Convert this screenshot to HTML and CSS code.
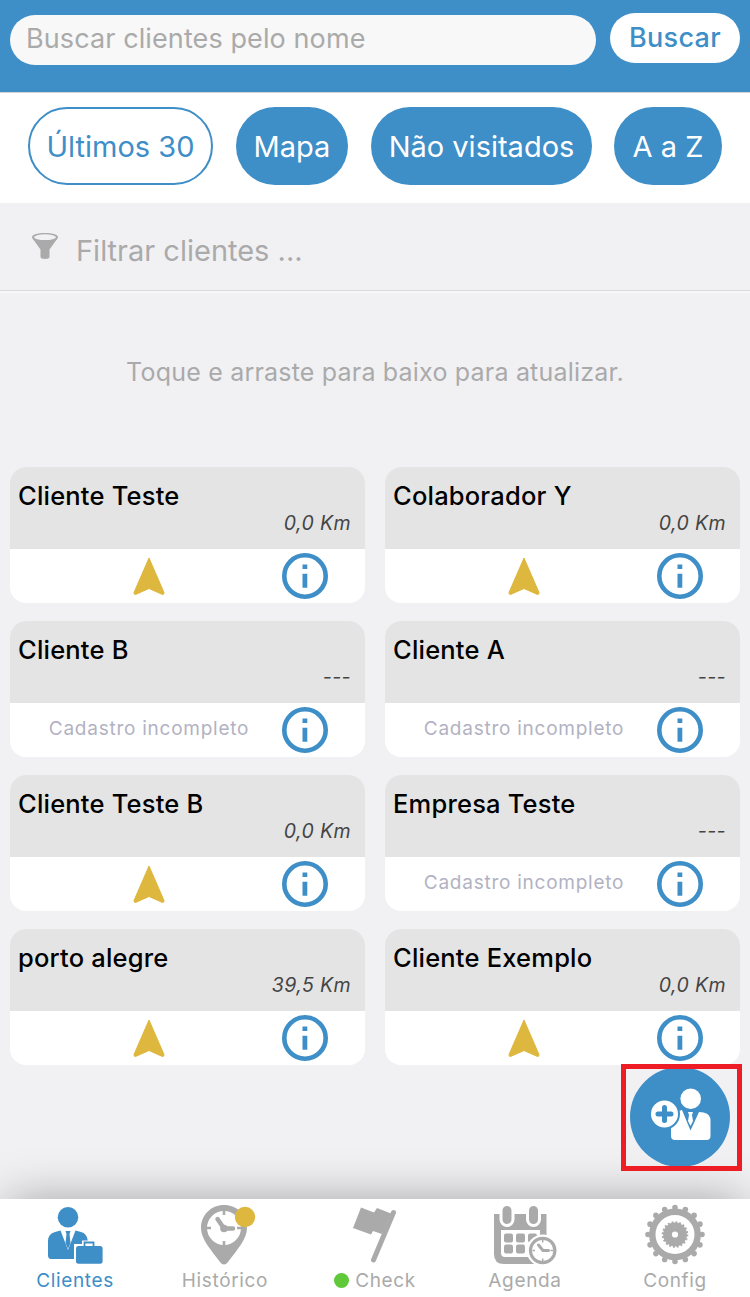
FILE: index.html
```html
<!DOCTYPE html>
<html lang="pt-BR">

<head>
    <meta charset="UTF-8">
    <meta name="viewport" content="width=device-width, initial-scale=1.0">
    <title>Clientes</title>

    <link rel="stylesheet" href="styles.css">
</head>

<body>
    <!-- shared icons -->
    <svg class="sprite" aria-hidden="true">
        <symbol id="arrow" viewBox="0 0 32 40">
            <path d="M16 2 L31 36.5 Q31.2 38.8 29.3 38.4 L16 32.5 L2.7 38.4 Q.8 38.8 1 36.5 Z" fill="#deb73e" stroke="#deb73e" stroke-width="1" stroke-linejoin="round" />
        </symbol>
        <symbol id="info" viewBox="0 0 46 46">
            <circle cx="23" cy="23" r="20.7" fill="none" stroke="#3e8ec7" stroke-width="4.6" />
            <path d="M20.5 11.5h4.8v4.6h-4.8zM20.5 20.8h4.8v14h-4.8z" fill="#3e8ec7" />
        </symbol>
    </svg>

    <div class="main">
        <div class="header">
            <input class="search" type="text" placeholder="Buscar clientes pelo nome">
            <div class="search-btn">Buscar</div>
        </div>

        <div class="pills">
            <div class="pill pill-30 active">Últimos 30</div>
            <div class="pill pill-map">Mapa</div>
            <div class="pill pill-nv">Não visitados</div>
            <div class="pill pill-az">A a Z</div>
        </div>

        <div class="filter">
            <svg class="funnel" width="28" height="28" viewBox="0 0 28 28">
                <path d="M1 5C1 2.600 6.500 1 14 1s13 1.600 13 4c0 1.300-1.200 2.600-2.400 4L18.500 17.500V25c0 1.200-1.800 2-4.500 2s-4.500-.8-4.500-2v-7.500L3.400 9C2.200 7.600 1 6.300 1 5z" fill="#aaa" />
                <ellipse cx="14" cy="5.200" rx="11" ry="2.900" fill="#f1f1f4" />
            </svg>
            <span>Filtrar clientes ...</span>
        </div>

        <div class="refresh">Toque e arraste para baixo para atualizar.</div>

        <div class="cards">
            <div class="card">
                <div class="card-top"><div class="name">Cliente Teste</div><div class="km">0,0 Km</div></div>
                <div class="card-bottom"><div class="status"><svg class="arrow"><use href="#arrow" /></svg></div><svg class="info"><use href="#info" /></svg></div>
            </div>
            <div class="card">
                <div class="card-top"><div class="name">Colaborador Y</div><div class="km">0,0 Km</div></div>
                <div class="card-bottom"><div class="status"><svg class="arrow"><use href="#arrow" /></svg></div><svg class="info"><use href="#info" /></svg></div>
            </div>
            <div class="card">
                <div class="card-top"><div class="name">Cliente B</div><div class="km">---</div></div>
                <div class="card-bottom"><div class="status">Cadastro incompleto</div><svg class="info"><use href="#info" /></svg></div>
            </div>
            <div class="card">
                <div class="card-top"><div class="name">Cliente A</div><div class="km">---</div></div>
                <div class="card-bottom"><div class="status">Cadastro incompleto</div><svg class="info"><use href="#info" /></svg></div>
            </div>
            <div class="card">
                <div class="card-top"><div class="name">Cliente Teste B</div><div class="km">0,0 Km</div></div>
                <div class="card-bottom"><div class="status"><svg class="arrow"><use href="#arrow" /></svg></div><svg class="info"><use href="#info" /></svg></div>
            </div>
            <div class="card">
                <div class="card-top"><div class="name">Empresa Teste</div><div class="km">---</div></div>
                <div class="card-bottom"><div class="status">Cadastro incompleto</div><svg class="info"><use href="#info" /></svg></div>
            </div>
            <div class="card">
                <div class="card-top"><div class="name">porto alegre</div><div class="km">39,5 Km</div></div>
                <div class="card-bottom"><div class="status"><svg class="arrow"><use href="#arrow" /></svg></div><svg class="info"><use href="#info" /></svg></div>
            </div>
            <div class="card">
                <div class="card-top"><div class="name">Cliente Exemplo</div><div class="km">0,0 Km</div></div>
                <div class="card-bottom"><div class="status"><svg class="arrow"><use href="#arrow" /></svg></div><svg class="info"><use href="#info" /></svg></div>
            </div>
        </div>

        <div class="tabs">
            <div class="tab active">
                <svg width="150" height="66" viewBox="0 0 150 66">
                    <circle cx="68" cy="18.300" r="10.300" fill="#3e8ec7" />
                    <path d="M48 56V42q0-7 7-9l5.500-1.500L68 51l7.500-19.500L81 33q6 1.500 6.800 8.500H82V45h-8v15H51q-3 0-3-4z" fill="#3e8ec7" />
                    <path d="M65.500 32h5l-1 3 1 9-2.500 6-2.500-6 1-9z" fill="#3e8ec7" />
                    <rect x="76" y="47" width="26.600" height="17.700" rx="2.500" fill="#3e8ec7" />
                    <path d="M84.500 47v-3.500h9V47" fill="none" stroke="#3e8ec7" stroke-width="1.800" />
                </svg>
                <span>Clientes</span>
            </div>
            <div class="tab">
                <svg width="150" height="66" viewBox="0 0 150 66">
                    <path d="M74 6c-13 0-23 10-23 23 0 11 10 22 19 34q4 5 8 0c9-12 19-23 19-34C97 16 87 6 74 6z" fill="#aaa" />
                    <circle cx="74" cy="29" r="17" fill="#fff" />
                    <path d="M74 12v4M74 42v4M57 29h4M87 29h4" stroke="#aaa" stroke-width="2.500" />
                    <path d="M67.500 20L74 29.500h9" fill="none" stroke="#aaa" stroke-width="4.500" stroke-linecap="round" stroke-linejoin="round" />
                    <circle cx="74" cy="29.500" r="3.800" fill="#aaa" />
                    <circle cx="95" cy="18" r="10.200" fill="#deb73e" />
                </svg>
                <span>Histórico</span>
            </div>
            <div class="tab">
                <svg width="150" height="66" viewBox="0 0 150 66">
                    <path d="M61 8.500l13 5 3-4.500 14 5.500L82 35l-9-3-2 3.500L53 29z" fill="#aaa" />
                    <path d="M93.500 13.500L73.500 61" stroke="#aaa" stroke-width="5" stroke-linecap="round" />
                </svg>
                <span><i class="dot"></i>Check</span>
            </div>
            <div class="tab">
                <svg width="150" height="66" viewBox="0 0 150 66">
                    <path d="M44 15h52.500v42q0 8-8 8H54q-10 0-10-10z" fill="#aaa" />
                    <path d="M51 31h39v27H55q-4 0-4-4z" fill="#fff" />
                    <g fill="#aaa" stroke="#fff" stroke-width="3">
                        <rect x="51" y="5.500" width="12" height="21" rx="6" />
                        <rect x="77.500" y="5.500" width="12" height="21" rx="6" />
                    </g>
                    <g fill="#aaa">
                        <rect x="54" y="34.500" width="9" height="9" rx="2" />
                        <rect x="66" y="34.500" width="9" height="9" rx="2" />
                        <rect x="78" y="34.500" width="9" height="9" rx="2" />
                        <rect x="54" y="45.500" width="9" height="9" rx="2" />
                        <rect x="66" y="45.500" width="9" height="9" rx="2" />
                    </g>
                    <circle cx="92.700" cy="51.500" r="16" fill="#fff" />
                    <circle cx="92.700" cy="51.500" r="12.200" fill="#fff" stroke="#aaa" stroke-width="3.200" />
                    <path d="M92.700 41v2.500M92.700 59.500V62M82.500 51.500h2.500M100.500 51.500h2.500" stroke="#aaa" stroke-width="1.500" />
                    <path d="M88.500 46l4.500 5.500h5.500" fill="none" stroke="#aaa" stroke-width="3" stroke-linecap="round" stroke-linejoin="round" />
                </svg>
                <span>Agenda</span>
            </div>
            <div class="tab">
                <svg width="150" height="66" viewBox="0 0 150 66">
                    <circle cx="75" cy="35.500" r="27" fill="none" stroke="#aaa" stroke-width="5.600" stroke-linecap="round" pathLength="160" stroke-dasharray="0 10" />
                    <circle cx="75" cy="35.500" r="22.700" fill="none" stroke="#aaa" stroke-width="6.400" />
                    <circle cx="75" cy="35.500" r="7.500" fill="none" stroke="#aaa" stroke-width="8.800" />
                    <circle cx="75" cy="35.500" r="12.200" fill="none" stroke="#aaa" stroke-width="2.200" stroke-dasharray="1.916 1.916" />
                </svg>
                <span>Config</span>
            </div>
        </div>

        <!-- floating "new client" button -->
        <div class="add">
            <svg width="111" height="97" viewBox="0 0 111 97">
                <circle cx="54" cy="48" r="50" fill="#3e8ec7" />
                <circle cx="64.700" cy="29.700" r="10.300" fill="#fff" />
                <path d="M45 67V46q2-3 6-3.500l5-1.500L64.500 61.500 73 43l4.500.5q7 1.500 7 8V67q0 4-4 4H49q-4 0-4-4z" fill="#fff" />
                <path d="M62 43h5l-1 3 1 6-2.500 5-2.500-5 1-6z" fill="#fff" />
                <circle cx="38.500" cy="45" r="15.500" fill="#3e8ec7" />
                <circle cx="38.500" cy="45" r="13.500" fill="#fff" />
                <path d="M38.500 38.500v13M32 45h13" stroke="#3e8ec7" stroke-width="5" stroke-linecap="round" />
            </svg>
        </div>
    </div>
</body>

</html>
```
FILE: styles.css
```css
* {
    box-sizing: border-box;
}

body {
    margin: 0;
    font-family: Inter, "Liberation Sans", sans-serif;
}

svg {
    display: block;
    flex-shrink: 0;
}

.sprite {
    display: none;
}

.main {
    position: relative;
    width: 750px;
    height: 1297px;
    background-color: #f1f1f4;
    overflow: hidden;
    display: flex;
    flex-direction: column;
}

.header {
    height: 93px;
    padding: 13px 10px 0;
    background-color: #3e8ec7;
    border-bottom: 1px solid #d0d4d8;
    display: flex;
    align-items: flex-start;
    gap: 14px;
}

.search {
    width: 586px;
    height: 50px;
    margin-top: 2px;
    padding: 0 16px 3px;
    border: none;
    border-radius: 25px;
    background-color: #f8f8f8;
    font-family: inherit;
    font-size: 27px;
    letter-spacing: .1px;
}

.search::placeholder {
    color: #aaa;
    opacity: 1;
}

.search-btn {
    width: 130px;
    height: 50px;
    line-height: 49px;
    border-radius: 25px;
    background-color: white;
    color: #3e8ec7;
    font-size: 27px;
    font-weight: 500;
    letter-spacing: .3px;
    text-align: center;
}

.pills {
    height: 110px;
    padding: 14px 28px 0;
    background-color: white;
    display: flex;
    gap: 23px;
}

.pill {
    height: 78px;
    line-height: 79px;
    border-radius: 39px;
    background-color: #3e8ec7;
    color: white;
    font-size: 29px;
    text-align: center;
    white-space: nowrap;
}

.pill.active {
    border: 2px solid #3e8ec7;
    background-color: white;
    color: #3e8ec7;
    line-height: 75px;
}

.pill-30 {
    width: 185px;
}

.pill-map {
    width: 112px;
}

.pill-nv {
    width: 221px;
}

.pill-az {
    width: 108px;
    margin-left: -1px;
}

.filter {
    height: 88px;
    padding-left: 31px;
    border-bottom: 1px solid #dadada;
    box-shadow: 0 2px 0 #f8f8f8;
    color: #aaa;
    font-size: 29px;
    display: flex;
    align-items: center;
}

.funnel {
    margin-bottom: 2px;
}

.filter span {
    margin: 8px 0 0 17px;
}

.refresh {
    height: 176px;
    padding-top: 66px;
    color: #aaa;
    font-size: 25px;
    letter-spacing: .2px;
    line-height: 30px;
    text-align: center;
}

.cards {
    flex: 1;
    padding: 0 10px;
    display: grid;
    grid-template-columns: 355px 355px;
    align-content: start;
    gap: 18px 20px;
}

.card {
    height: 136px;
    border-radius: 16px;
    background-color: white;
    overflow: hidden;
}

.card-top {
    height: 82px;
    padding: 13px 14px 0 8px;
    background-color: #e4e4e4;
}

.name {
    font-size: 25.5px;
    font-weight: 500;
    letter-spacing: .2px;
    line-height: 32px;
    color: black;
}

.km {
    font-size: 19.5px;
    font-style: italic;
    letter-spacing: .4px;
    line-height: 22px;
    text-align: right;
    color: #444;
}

.card-bottom {
    height: 54px;
    padding-right: 37px;
    display: flex;
    align-items: center;
}

.status {
    width: 272px;
    padding-left: 6px;
    display: flex;
    justify-content: center;
    color: #b2b2c2;
    font-size: 19px;
    letter-spacing: .75px;
    line-height: 24px;
    padding-bottom: 2px;
}

.arrow {
    width: 32px;
    height: 40px;
    margin-top: 1px;
}

.info {
    width: 46px;
    height: 46px;
}

.tabs {
    height: 98px;
    background-color: white;
    box-shadow: 0 -4px 50px -8px rgba(0, 0, 0, .38);
    display: flex;
}

.tab {
    width: 150px;
    color: #aaa;
    font-size: 19px;
    letter-spacing: .65px;
    text-align: center;
}

.tab.active {
    color: #3e8ec7;
}

.tab span {
    display: block;
    line-height: 32px;
}

.dot {
    display: inline-block;
    width: 15px;
    height: 15px;
    margin-right: 6px;
    border-radius: 50%;
    background-color: #60c93a;
    vertical-align: -1px;
}

.add {
    position: absolute;
    left: 621px;
    top: 1064px;
    width: 121px;
    height: 107px;
    border: 5px solid #ee1c25;
}
```
